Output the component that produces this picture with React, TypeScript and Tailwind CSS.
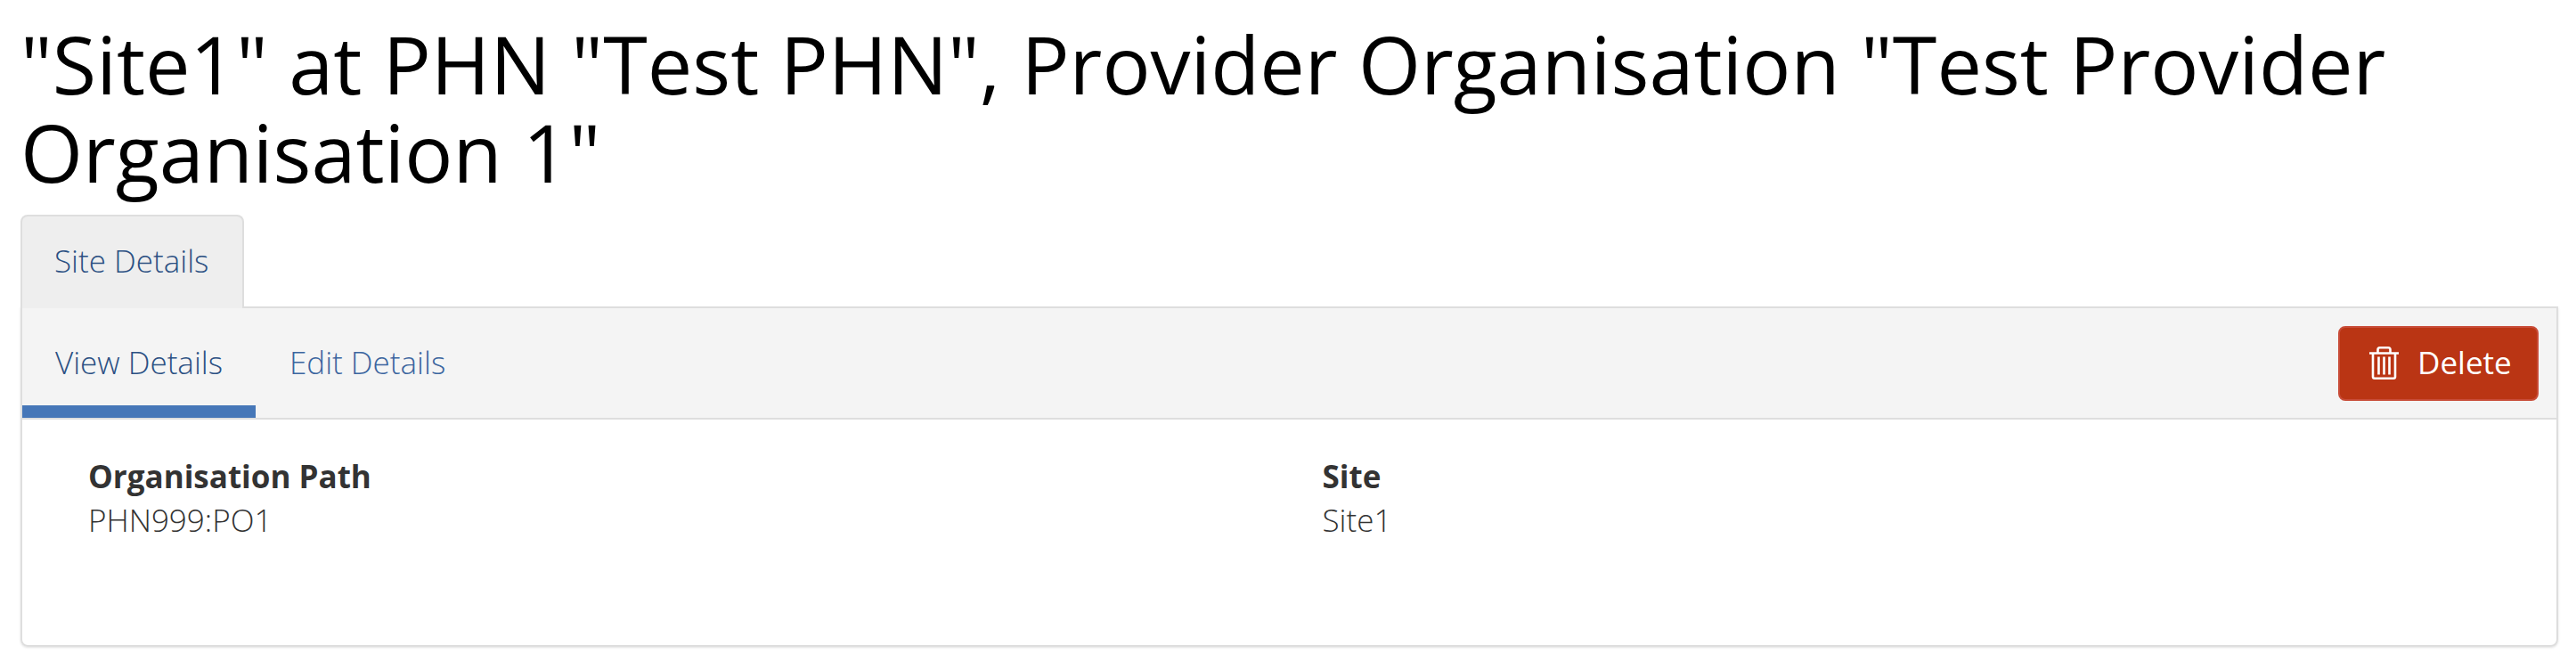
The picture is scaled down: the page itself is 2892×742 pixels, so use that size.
const font = { fontFamily: '"Open Sans", sans-serif' };

function TrashIcon() {
  return (
    <svg width="33" height="37" viewBox="0 0 33 37" fill="none" stroke="white" strokeWidth="2.6" className="shrink-0">
      <path d="M0 7.500h33" />
      <path d="M9.500 7V3.500C9.500 2.200 10.500 1.300 11.800 1.300h9.400c1.300 0 2.300.9 2.300 2.200V7" />
      <path d="M4 7.500v26.500c0 1.100.8 1.700 1.800 1.700h21.400c1 0 1.800-.6 1.800-1.700V7.500" />
      <path d="M10.500 11.500v20M16.500 11.500v20M22.500 11.500v20" />
    </svg>
  );
}

export default function App() {
  return (
    <div className="bg-white w-full min-h-screen pt-[22px] pl-[23px]" style={font}>
      <h1 className="text-[90px] leading-[99px] font-normal text-black pr-[60px]">
        "Site1" at PHN "Test PHN", Provider Organisation "Test Provider Organisation 1"
      </h1>
      <div className="mt-[21px] flex">
        <div className="relative z-10 -mb-[2px] h-[105px] w-[251px] rounded-t-[8px] border-2 border-b-0 border-[#dedede] bg-[#eeeeee] pl-[36px] pt-[26px] text-[35px] leading-[48px] font-light text-[#2b5083]">
          Site Details
        </div>
      </div>
      <div className="w-[2849px] h-[382px] rounded-b-[8px] border-2 border-[#dedede] shadow-sm">
        <div className="flex h-[125px] items-stretch border-b-2 border-[#dedede] bg-[#f4f4f4] text-[35px] font-light">
          <div className="flex w-[262px] items-center justify-center border-b-[14px] border-[#4677b8] pt-[14px] text-[#2b5083]">
            View Details
          </div>
          <div className="flex items-center pl-[38px] text-[#3b659f]">Edit Details</div>
          <div className="ml-auto flex items-center pr-[20px]">
            <button className="flex h-[84px] w-[225px] items-center gap-[21px] rounded-[8px] border-2 border-[#c84c38] bg-[#ba3514] pl-[33px] font-normal text-white">
              <TrashIcon />
              Delete
            </button>
          </div>
        </div>
        <div className="grid grid-cols-2 pl-[74px] pt-[40px] text-[35px] text-[#333333]">
          <div>
            <div className="font-bold leading-[48px]">Organisation Path</div>
            <div className="font-light leading-[50px]">PHN999:PO1</div>
          </div>
          <div>
            <div className="font-bold leading-[48px]">Site</div>
            <div className="font-light leading-[50px]">Site1</div>
          </div>
        </div>
      </div>
    </div>
  );
}
